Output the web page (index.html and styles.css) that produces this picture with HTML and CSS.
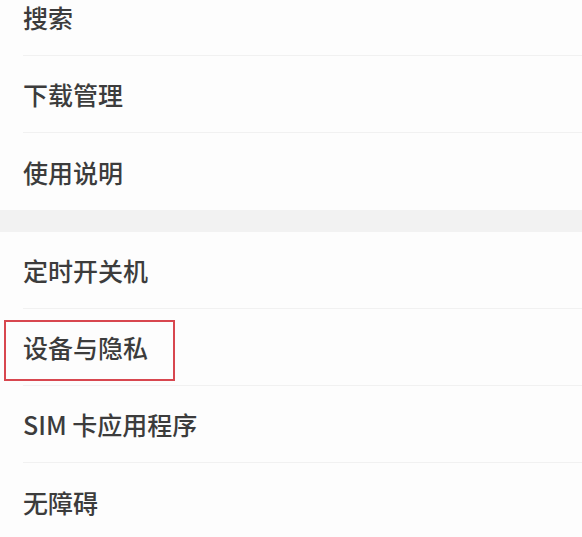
FILE: index.html
```html
<!DOCTYPE html>
<html lang="zh-CN">
<head>
<meta charset="utf-8">
<title>设置</title>
<link rel="stylesheet" href="styles.css">
</head>
<body>
    <div class="settings">
        <div class="group group-first">
            <div class="item">搜索</div>
            <div class="item">下载管理</div>
            <div class="item">使用说明</div>
        </div>
        <div class="gap"></div>
        <div class="group">
            <div class="item">定时开关机</div>
            <div class="item marked">设备与隐私</div>
            <div class="item">SIM 卡应用程序</div>
            <div class="item">无障碍</div>
        </div>
    </div>
</body>
</html>
```

FILE: styles.css
```css
body {
    margin: 0;
    background-color: #fdfdfd;
    font-family: "Noto Sans CJK SC", "Noto Sans", sans-serif;
    color: #3c3c3c;
    overflow: hidden;
}

.settings {
    width: 582px;
}

.group-first {
    margin-top: -21px;
}

.item {
    position: relative;
    display: flex;
    align-items: center;
    height: 76px;
    margin-left: 23px;
    font-size: 25px;
    font-weight: 500;
    border-bottom: 1px solid #f1f1f1;
}

.group .item:last-child {
    border-bottom: none;
    height: 77px;
}

.gap {
    height: 22px;
    background-color: #f2f2f2;
}

/* red frame drawn over the selected row */
.marked::after {
    content: "";
    position: absolute;
    left: -19px;
    top: 11px;
    width: 167px;
    height: 57px;
    border: 2px solid #d8474f;
}
```
